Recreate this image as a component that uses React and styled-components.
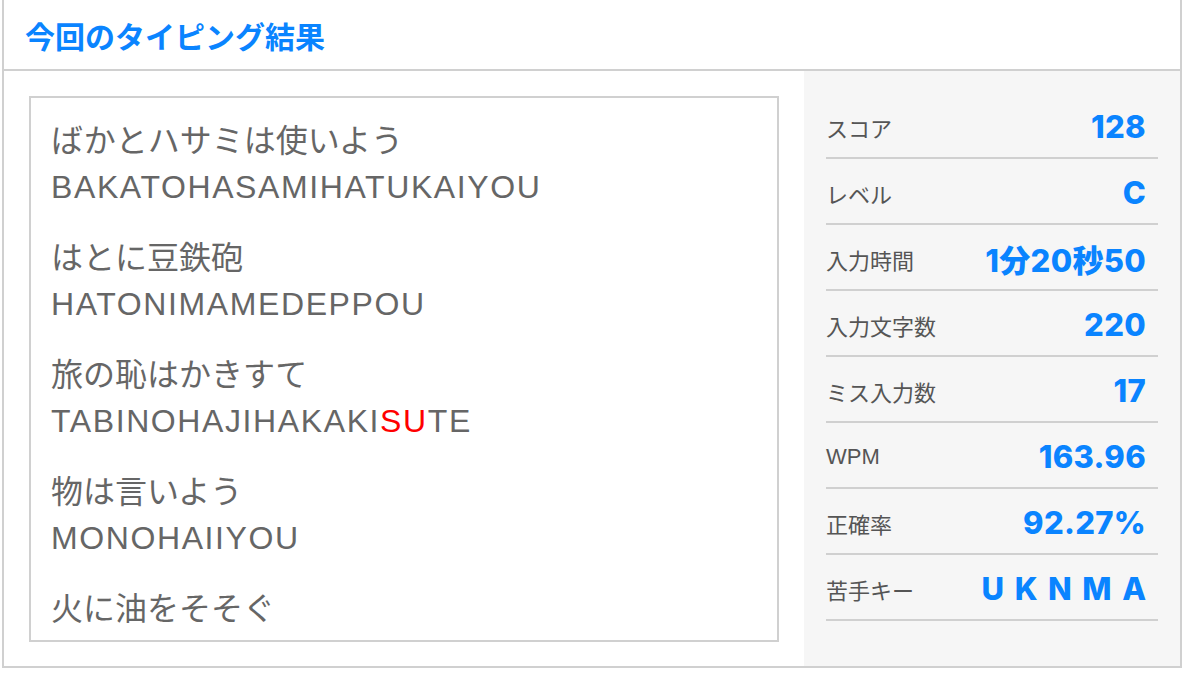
import React from 'react';
import styled, { createGlobalStyle } from 'styled-components';

const BLUE = '#0a84ff';
const LINE = '#d0d0d0';

const GlobalStyle = createGlobalStyle`
  html, body {
    margin: 0;
    padding: 0;
    background: #fff;
  }
  * {
    box-sizing: border-box;
  }
`;

const Panel = styled.div`
  width: 1180px;
  margin-left: 2px;
  border: 2px solid ${LINE};
  border-top: none;
  font-family: "Liberation Sans", "Noto Sans CJK JP", sans-serif;
`;

const Header = styled.div`
  height: 71px;
  padding: 0 21px;
  display: flex;
  align-items: center;
  border-bottom: 2px solid ${LINE};
`;

const Title = styled.h2`
  margin: 0;
  font-family: "Noto Sans CJK JP", sans-serif;
  font-size: 30px;
  font-weight: 700;
  color: ${BLUE};
`;

const Body = styled.div`
  display: flex;
`;

const WordColumn = styled.div`
  padding: 25px 25px 24px 25px;
`;

const WordBox = styled.div`
  width: 750px;
  height: 546px;
  border: 2px solid ${LINE};
  padding: 20px 20px;
  overflow: hidden;
`;

const Word = styled.div`
  margin-bottom: 25px;
  color: #666;
  font-size: 32px;
  line-height: 46px;
`;

const Kana = styled.div`
  font-family: "Liberation Sans", "Noto Sans CJK JP", sans-serif;
`;

const Roman = styled.div`
  font-family: "Liberation Sans", sans-serif;
  letter-spacing: 1.6px;
`;

const Miss = styled.span`
  color: #ff0000;
`;

const Stats = styled.div`
  flex: 1;
  background: #f6f6f6;
  padding: 22px 22px 0 22px;
`;

const StatRow = styled.div`
  height: 66px;
  display: flex;
  align-items: center;
  justify-content: space-between;
  padding: 3px 12px 0 0;
  border-bottom: 2px solid ${LINE};
`;

const Label = styled.span`
  font-family: "Liberation Sans", "Noto Sans CJK JP", sans-serif;
  font-size: 22px;
  color: #555;
`;

const Value = styled.span`
  font-family: "Inter", "Noto Sans CJK JP", sans-serif;
  font-size: 31px;
  font-weight: 800;
  color: ${BLUE};
  letter-spacing: ${(p) => (p.$spaced ? '0.34em' : '0.3px')};
  margin-right: ${(p) => (p.$spaced ? '-0.34em' : '0')};
`;

const words = [
  { kana: 'ばかとハサミは使いよう', roman: ['BAKATOHASAMIHATUKAIYOU'] },
  { kana: 'はとに豆鉄砲', roman: ['HATONIMAMEDEPPOU'] },
  { kana: '旅の恥はかきすて', roman: ['TABINOHAJIHAKAKI', { miss: 'SU' }, 'TE'] },
  { kana: '物は言いよう', roman: ['MONOHAIIYOU'] },
  { kana: '火に油をそそぐ', roman: [] },
];

const stats = [
  { label: 'スコア', value: '128' },
  { label: 'レベル', value: 'C' },
  { label: '入力時間', value: '1分20秒50' },
  { label: '入力文字数', value: '220' },
  { label: 'ミス入力数', value: '17' },
  { label: 'WPM', value: '163.96' },
  { label: '正確率', value: '92.27%' },
  { label: '苦手キー', value: 'UKNMA', spaced: true },
];

export default function App() {
  return (
    <>
      <GlobalStyle />
      <Panel>
        <Header>
          <Title>今回のタイピング結果</Title>
        </Header>
        <Body>
          <WordColumn>
            <WordBox>
              {words.map((w) => (
                <Word key={w.kana}>
                  <Kana>{w.kana}</Kana>
                  {w.roman.length > 0 && (
                    <Roman>
                      {w.roman.map((part, i) =>
                        typeof part === 'string' ? part : <Miss key={i}>{part.miss}</Miss>
                      )}
                    </Roman>
                  )}
                </Word>
              ))}
            </WordBox>
          </WordColumn>
          <Stats>
            {stats.map((s) => (
              <StatRow key={s.label}>
                <Label>{s.label}</Label>
                <Value $spaced={s.spaced}>{s.value}</Value>
              </StatRow>
            ))}
          </Stats>
        </Body>
      </Panel>
    </>
  );
}
